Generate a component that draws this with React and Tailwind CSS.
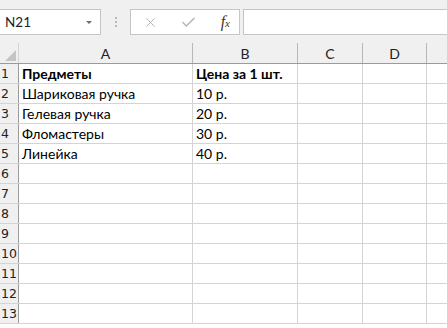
import { X, Check } from "lucide-react";

const cols = [
  { key: "A", w: "w-[174px]" },
  { key: "B", w: "w-[105px]" },
  { key: "C", w: "w-[65px]" },
  { key: "D", w: "w-[64px]" },
];

const rows = [
  ["Предметы", "Цена за 1 шт."],
  ["Шариковая ручка", "10 р."],
  ["Гелевая ручка", "20 р."],
  ["Фломастеры", "30 р."],
  ["Линейка", "40 р."],
  [], [], [], [], [], [], [], [],
];

const cellFont = { fontFamily: "Lato, 'Open Sans', sans-serif" };

function FormulaBar() {
  return (
    <div className="h-[43px] bg-[#f0f0f0] flex items-start pt-[9px]">
      <div className="w-[101px] h-[26px] bg-white border border-[#c6c6c6] border-l-0 flex items-center justify-between pl-[5px] pr-[8px]">
        <span className="text-[13.5px] text-[#222] font-['Lato',sans-serif]">N21</span>
        <span className="w-0 h-0 border-l-[3px] border-r-[3px] border-t-[3px] border-l-transparent border-r-transparent border-t-[#6d6d6d]" />
      </div>
      <div className="w-[29px] h-[26px] flex flex-col items-center justify-center gap-[2px]">
        <span className="w-[2px] h-[2px] bg-[#b8b8b8]" />
        <span className="w-[2px] h-[2px] bg-[#b8b8b8]" />
        <span className="w-[2px] h-[2px] bg-[#b8b8b8]" />
      </div>
      <div className="w-[110px] h-[26px] bg-white border border-[#c6c6c6] flex items-center pl-[12px] pr-[9px]">
        <X size={15} strokeWidth={1.6} className="text-[#b4b4b4]" />
        <Check size={17} strokeWidth={2} className="text-[#b4b4b4] ml-[22px]" />
        <span className="ml-auto text-[16px] italic text-[#4a3030] font-['Liberation_Serif',serif] leading-none">
          f<span className="text-[11px]">x</span>
        </span>
      </div>
      <div className="ml-[3px] flex-1 h-[26px] bg-white border border-[#c6c6c6] border-r-0" />
    </div>
  );
}

function HeaderRow() {
  return (
    <div className="flex h-[21px] bg-[#f0f0f0] border-b border-[#9b9b9b]">
      <div className="w-[19px] shrink-0 border-r border-[#d4d4d4] flex items-end justify-end pr-[2px] pb-[2px]">
        <svg width="11" height="11" viewBox="0 0 11 11">
          <polygon points="11,0 11,11 0,11" fill="#c4c4c4" />
        </svg>
      </div>
      {cols.map((c) => (
        <div
          key={c.key}
          className={`${c.w} shrink-0 border-r border-[#b8b8b8] flex items-center justify-center text-[14px] text-[#222]`}
          style={cellFont}
        >
          {c.key}
        </div>
      ))}
      <div className="flex-1" />
    </div>
  );
}

function Row({ n, a, b }) {
  const bold = n === 1 ? "font-bold" : "";
  return (
    <div className="flex h-[20px] border-b border-[#d4d4d4]">
      <div className="w-[19px] shrink-0 bg-[#f0f0f0] border-r border-[#9b9b9b] flex items-end pb-[1px] pl-[1px] text-[12.5px] text-[#222] leading-[16px] font-['DejaVu_Sans',sans-serif]">
        {n}
      </div>
      <div
        className={`w-[174px] shrink-0 border-r border-[#d4d4d4] flex items-end pl-[3px] pb-[1px] text-[14px] text-black leading-[17px] ${bold}`}
        style={cellFont}
      >
        {a}
      </div>
      <div
        className={`w-[105px] shrink-0 border-r border-[#d4d4d4] flex items-end pl-[3px] pb-[1px] text-[14px] text-black leading-[17px] ${bold}`}
        style={cellFont}
      >
        {b}
      </div>
      <div className="w-[65px] shrink-0 border-r border-[#d4d4d4]" />
      <div className="w-[64px] shrink-0 border-r border-[#d4d4d4]" />
      <div className="flex-1" />
    </div>
  );
}

export default function App() {
  return (
    <div className="w-[447px] h-[328px] bg-white overflow-hidden">
      <FormulaBar />
      <HeaderRow />
      {rows.map((r, i) => (
        <Row key={i} n={i + 1} a={r[0]} b={r[1]} />
      ))}
    </div>
  );
}
